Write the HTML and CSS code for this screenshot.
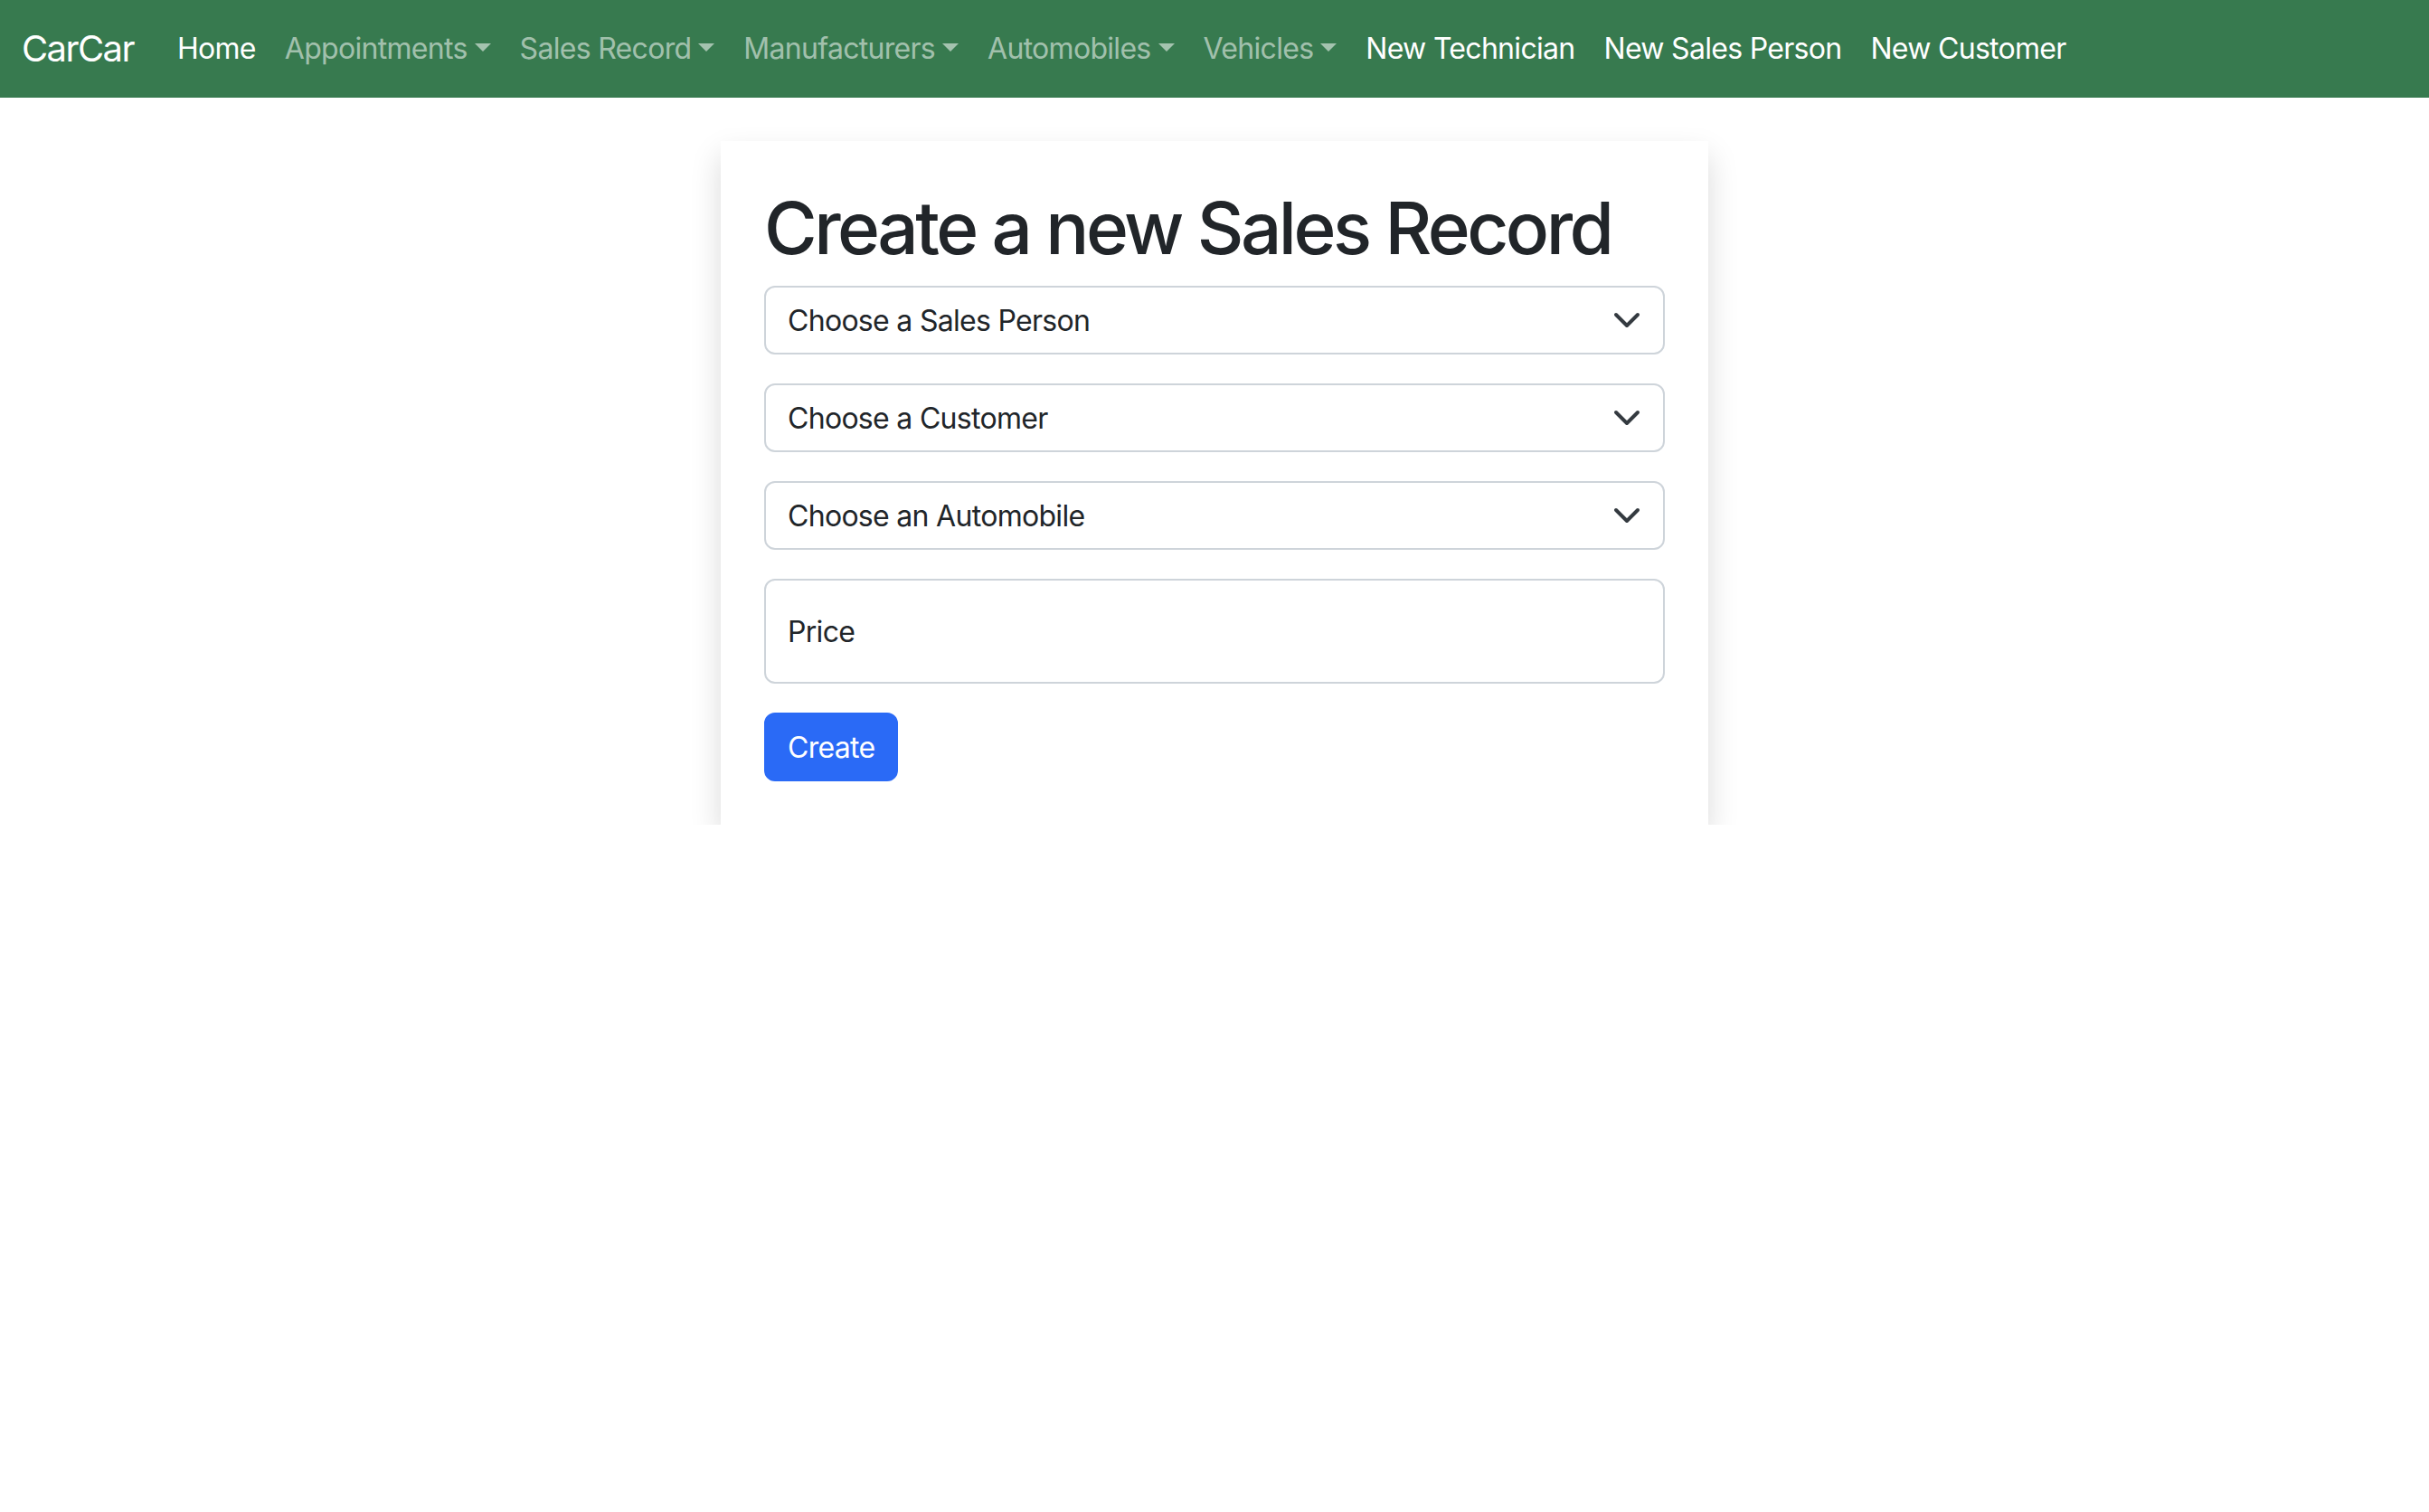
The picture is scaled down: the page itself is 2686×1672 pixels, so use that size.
FILE: index.html
```html
<!DOCTYPE html>
<html lang="en">
<head>
<meta charset="utf-8">
<title>CarCar</title>
<link rel="stylesheet" href="styles.css">
</head>
<body>
<nav class="navbar">
  <a class="brand" href="#">CarCar</a>
  <ul class="nav">
    <li><a class="nav-link active" href="#">Home</a></li>
    <li><a class="nav-link dropdown" href="#">Appointments</a></li>
    <li><a class="nav-link dropdown" href="#">Sales Record</a></li>
    <li><a class="nav-link dropdown" href="#">Manufacturers</a></li>
    <li><a class="nav-link dropdown" href="#">Automobiles</a></li>
    <li><a class="nav-link dropdown" href="#">Vehicles</a></li>
    <li><a class="nav-link active" href="#">New Technician</a></li>
    <li><a class="nav-link active" href="#">New Sales Person</a></li>
    <li><a class="nav-link active" href="#">New Customer</a></li>
  </ul>
</nav>
<main class="page">
  <div class="card">
    <h1 class="title">Create a new Sales Record</h1>
    <form class="form">
      <div class="select-wrap">
        <select class="form-select"><option>Choose a Sales Person</option></select>
        <svg class="chevron" viewBox="0 0 16 16" width="32" height="32"><path d="m2 5 6 6 6-6" fill="none" stroke="#343a40" stroke-linecap="round" stroke-linejoin="round" stroke-width="2"/></svg>
      </div>
      <div class="select-wrap">
        <select class="form-select"><option>Choose a Customer</option></select>
        <svg class="chevron" viewBox="0 0 16 16" width="32" height="32"><path d="m2 5 6 6 6-6" fill="none" stroke="#343a40" stroke-linecap="round" stroke-linejoin="round" stroke-width="2"/></svg>
      </div>
      <div class="select-wrap">
        <select class="form-select"><option>Choose an Automobile</option></select>
        <svg class="chevron" viewBox="0 0 16 16" width="32" height="32"><path d="m2 5 6 6 6-6" fill="none" stroke="#343a40" stroke-linecap="round" stroke-linejoin="round" stroke-width="2"/></svg>
      </div>
      <div class="form-floating">
        <input class="form-control" type="number" placeholder=" ">
        <label class="float-label">Price</label>
      </div>
      <div><button class="btn" type="button">Create</button></div>
    </form>
  </div>
</main>
</body>
</html>
```
FILE: styles.css
```css
* { box-sizing: border-box; }
html, body { margin: 0; padding: 0; }
body {
  font-family: Inter, "Noto Sans", "Liberation Sans", sans-serif;
  color: #212529;
  background: #fff;
  font-size: 32px;
  line-height: 1.5;
}
a { text-decoration: none; }

.navbar {
  display: flex;
  align-items: center;
  height: 108px;
  padding: 0 24px;
  background: #377a4f;
}
.brand {
  font-size: 40px;
  line-height: 60px;
  color: #fff;
  margin-right: 32px;
  letter-spacing: -1.6px;
}
.nav {
  display: flex;
  list-style: none;
  margin: 0;
  padding: 0;
}
.nav-link {
  display: block;
  padding: 0 16px;
  font-size: 32px;
  line-height: 48px;
  color: rgba(255, 255, 255, 0.55);
  letter-spacing: -0.7px;
}
.nav-link.active { color: #fff; }
.dropdown::after {
  content: "";
  display: inline-block;
  margin-left: 8px;
  vertical-align: 8px;
  border-top: 9px solid;
  border-left: 9px solid transparent;
  border-right: 9px solid transparent;
  border-bottom: 0;
}

.page { padding-top: 48px; }
.card {
  width: 1092px;
  margin: 0 auto;
  padding: 48px;
  background: #fff;
  box-shadow: 0 16px 32px rgba(0, 0, 0, 0.15);
}
.title {
  margin: 0 0 16px;
  font-size: 80px;
  line-height: 1.2;
  font-weight: 500;
  letter-spacing: -3.5px;
}
.form {
  display: flex;
  flex-direction: column;
  gap: 32px;
}
.select-wrap { position: relative; }
.form-select {
  display: block;
  width: 100%;
  height: 76px;
  padding: 13px 72px 11px 24px;
  font-family: inherit;
  font-size: 32px;
  line-height: 48px;
  color: #212529;
  background: #fff;
  border: 2px solid #ced4da;
  border-radius: 12px;
  appearance: none;
  -webkit-appearance: none;
  letter-spacing: -0.7px;
}
.chevron {
  position: absolute;
  right: 26px;
  top: 22px;
  pointer-events: none;
}
.form-floating { position: relative; }
.form-control {
  display: block;
  width: 100%;
  height: 116px;
  padding: 32px 24px;
  font-family: inherit;
  font-size: 32px;
  border: 2px solid #ced4da;
  border-radius: 12px;
  background: #fff;
}
.form-control::placeholder { color: transparent; }
.float-label {
  position: absolute;
  top: 0;
  left: 0;
  padding: 35px 26px;
  font-size: 32px;
  line-height: 48px;
  color: #212529;
  pointer-events: none;
  letter-spacing: -0.7px;
}
.btn {
  display: inline-block;
  height: 76px;
  padding: 13px 24px 11px;
  font-family: inherit;
  font-size: 32px;
  line-height: 48px;
  color: #fff;
  background: #2a6af6;
  border: 2px solid #2a6af6;
  border-radius: 12px;
  letter-spacing: -0.7px;
}
```
